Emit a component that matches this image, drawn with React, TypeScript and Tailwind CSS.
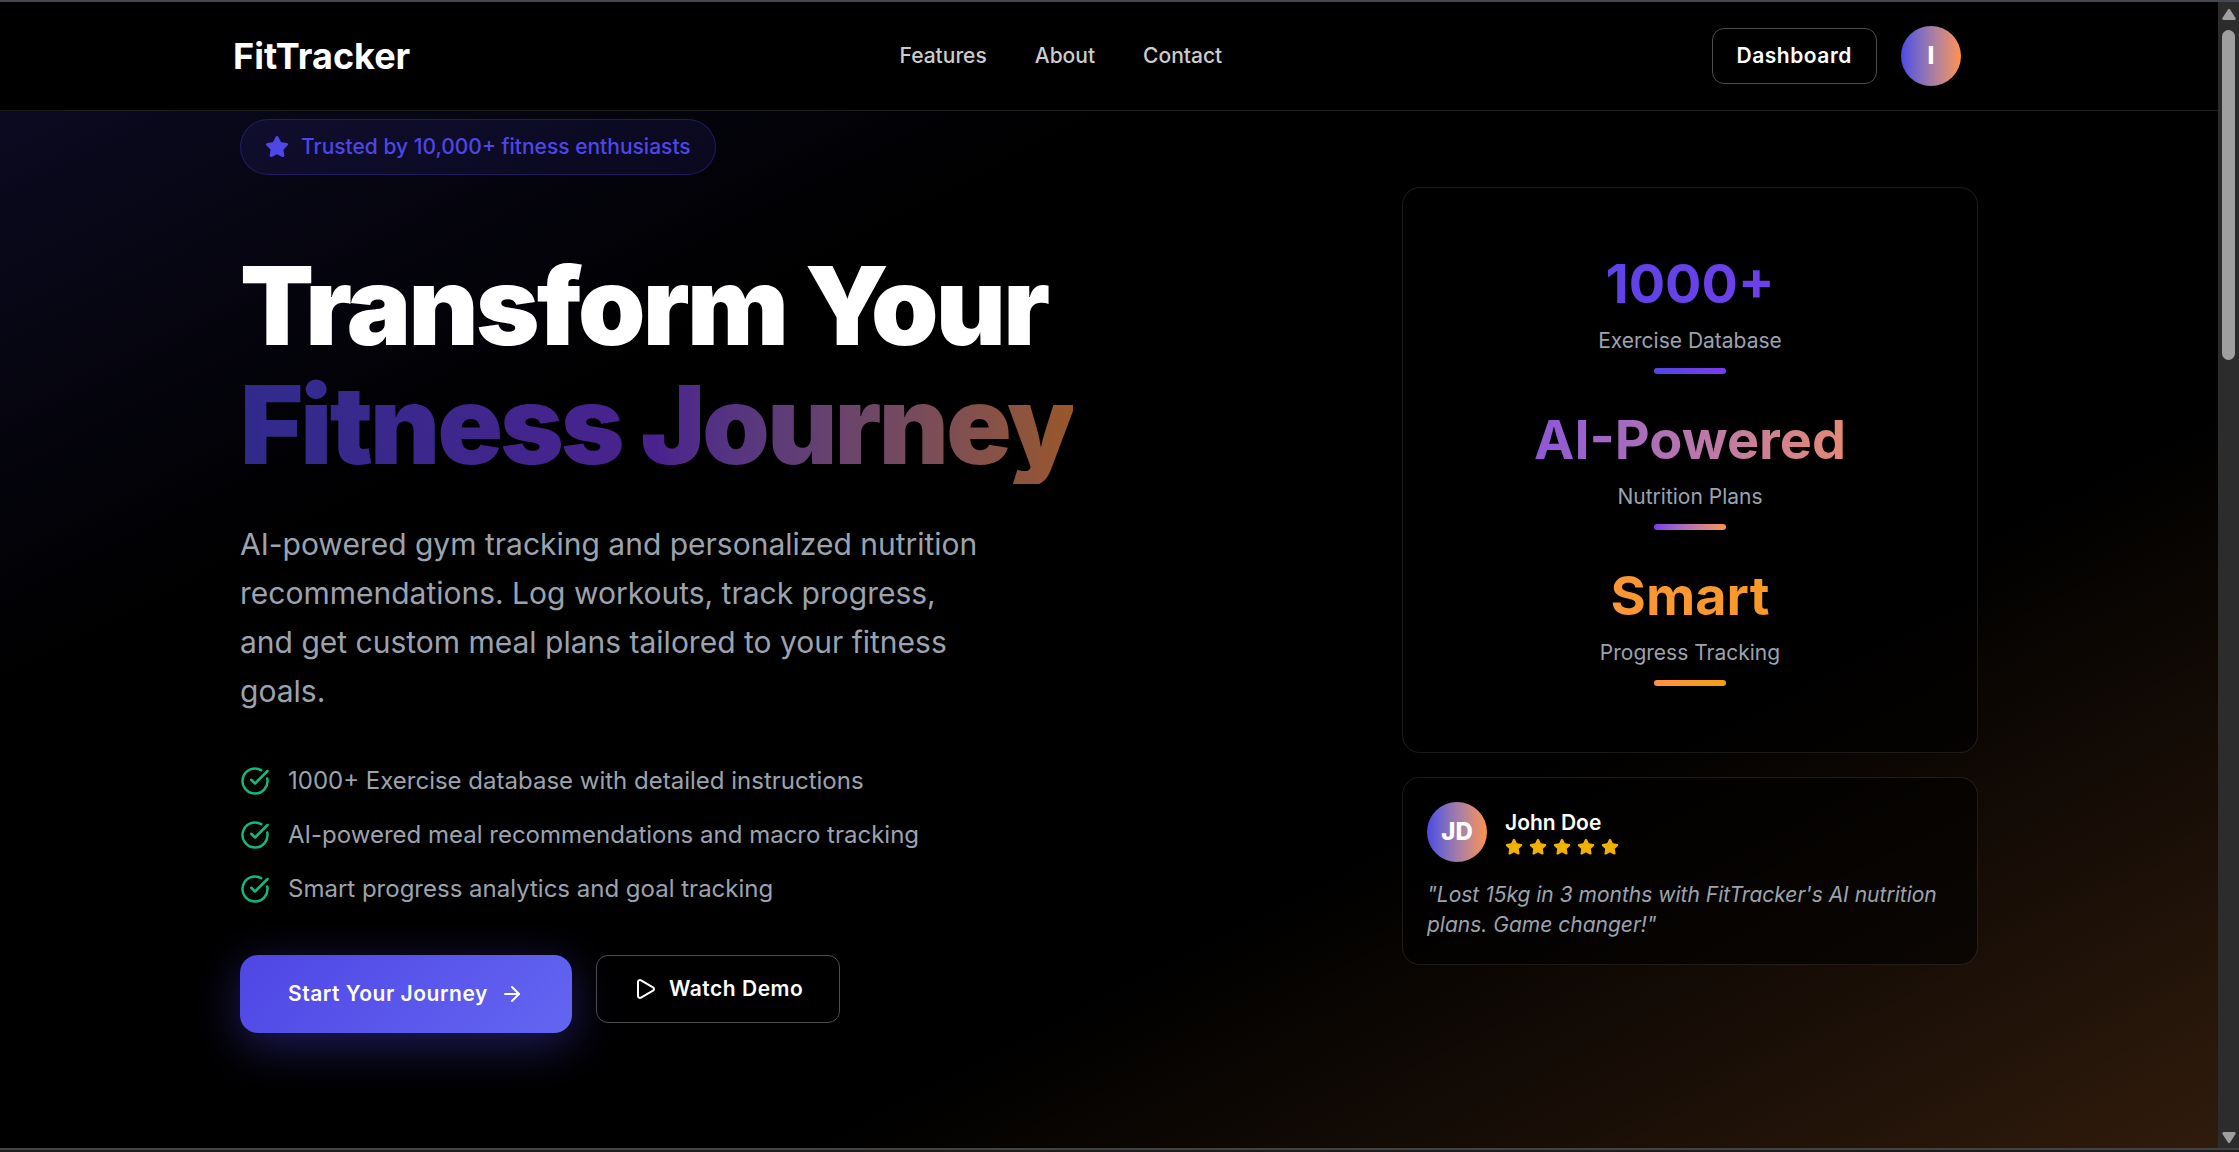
import React from 'react';
import { ArrowRight, CircleCheckBig, Play, Star } from 'lucide-react';

const NAV_LINKS = ['Features', 'About', 'Contact'];

const HIGHLIGHTS = [
  '1000+ Exercise database with detailed instructions',
  'AI-powered meal recommendations and macro tracking',
  'Smart progress analytics and goal tracking',
];

const STATS = [
  {
    value: '1000+',
    label: 'Exercise Database',
    gradient: 'from-[#4f46e5] to-[#7c3aed]',
  },
  {
    value: 'AI-Powered',
    label: 'Nutrition Plans',
    gradient: 'from-[#7c3aed] to-[#ff9142]',
  },
  {
    value: 'Smart',
    label: 'Progress Tracking',
    gradient: 'from-[#ff9142] to-[#f59e0b]',
  },
];

function Avatar({ initials }: { initials: string }) {
  return (
    <span className="flex size-[60px] shrink-0 items-center justify-center rounded-full bg-linear-to-r from-[#4f46e5] to-[#ff9142] text-2xl font-extrabold text-white">
      {initials}
    </span>
  );
}

function Header() {
  return (
    <header className="border-b border-[#1c1c1c] bg-black">
      <div className="mx-auto flex h-[108px] max-w-[1752px] items-center justify-between pr-6">
        <a href="#" className="text-4xl font-bold text-white">
          FitTracker
        </a>
        <nav className="flex gap-12">
          {NAV_LINKS.map(link => (
            <a
              key={link}
              href={`#${link.toLowerCase()}`}
              className="text-[21px] leading-8 font-medium text-[#cccccc]"
            >
              {link}
            </a>
          ))}
        </nav>
        <div className="flex items-center gap-6">
          <button
            type="button"
            className="h-14 rounded-xl border border-[#4d4d4d] px-6 text-[21px] font-semibold tracking-wide text-white"
          >
            Dashboard
          </button>
          <button type="button" aria-label="Account">
            <Avatar initials="I" />
          </button>
        </div>
      </div>
    </header>
  );
}

function HeroCopy() {
  return (
    <div>
      <div className="inline-flex h-14 items-center gap-3 rounded-full border border-[#4f46e5]/30 bg-[#4f46e5]/10 px-6 text-[21px] font-medium text-[#4f46e5]">
        <Star className="size-6 fill-current" />
        Trusted by 10,000+ fitness enthusiasts
      </div>

      <h1 className="mt-[71px] text-[108px] leading-[119px] font-black tracking-tight text-white">
        Transform Your
        <br />
        <span className="inline-block bg-linear-to-r from-[#4f46e5] via-[#7c3aed] to-[#ff9142] bg-clip-text text-transparent opacity-60">
          Fitness Journey
        </span>
      </h1>

      <p className="mt-9 max-w-[750px] text-3xl leading-[49px] text-[#9ca3af]">
        AI-powered gym tracking and personalized nutrition recommendations. Log
        workouts, track progress, and get custom meal plans tailored to your
        fitness goals.
      </p>

      <ul className="mt-[47px] space-y-[18px]">
        {HIGHLIGHTS.map(item => (
          <li
            key={item}
            className="flex items-center gap-[18px] text-2xl leading-9 text-[#9ca3af]"
          >
            <CircleCheckBig className="size-[30px] text-[#10b981]" />
            {item}
          </li>
        ))}
      </ul>

      <div className="mt-12 flex items-start gap-6 text-[21px] font-semibold tracking-wide text-white">
        <button
          type="button"
          className="flex h-[78px] items-center gap-3 rounded-[18px] bg-linear-135/srgb from-[#4f46e5] to-[#6366f1] px-12 shadow-[0_12px_48px_rgba(79,70,229,0.4)]"
        >
          Start Your Journey
          <ArrowRight className="size-6" />
        </button>
        <button
          type="button"
          className="flex h-[68px] items-center gap-3 rounded-xl border border-[#4d4d4d] px-9"
        >
          <Play className="size-6" />
          Watch Demo
        </button>
      </div>
    </div>
  );
}

function StatsCard() {
  return (
    <div className="space-y-[34px] rounded-[18px] border border-white/10 bg-black/60 px-12 pt-16 pb-[66px] text-center">
      {STATS.map(stat => (
        <div key={stat.label}>
          <div
            className={`bg-linear-to-r bg-clip-text text-[54px] leading-[63px] font-bold text-transparent ${stat.gradient}`}
          >
            {stat.value}
          </div>
          <div className="mt-2.5 text-[21px] leading-8 text-[#9ca3af]">
            {stat.label}
          </div>
          <div
            className={`mx-auto mt-[11px] h-1.5 w-18 rounded-full bg-linear-to-r ${stat.gradient}`}
          />
        </div>
      ))}
    </div>
  );
}

function Testimonial() {
  return (
    <figure className="rounded-[18px] border border-white/10 bg-black/60 p-6">
      <figcaption className="flex items-center gap-[18px]">
        <Avatar initials="JD" />
        <div className="pb-0.5">
          <div className="text-[21px] leading-[31px] font-semibold text-white">
            John Doe
          </div>
          <div className="flex gap-1.5 text-[#f0b100]">
            {[1, 2, 3, 4, 5].map(n => (
              <Star key={n} className="size-[18px] fill-current" />
            ))}
          </div>
        </div>
      </figcaption>
      <blockquote className="mt-[18px] text-[21px] leading-[30px] text-[#9ca3af] italic">
        "Lost 15kg in 3 months with FitTracker's AI nutrition plans. Game
        changer!"
      </blockquote>
    </figure>
  );
}

function ScrollRail() {
  return (
    <div
      aria-hidden="true"
      className="flex w-[21px] shrink-0 flex-col items-center bg-[#2c2c2c] pt-1.5 pb-1"
    >
      <svg viewBox="0 0 14 12" className="h-3 w-3.5 fill-[#9f9f9f]">
        <path d="M6 1.5Q7 0 8 1.5L13.6 10Q14 12 12.5 12H1.5Q0 12 .4 10Z" />
      </svg>
      <div className="mt-2.5 h-[330px] w-[13px] rounded-full bg-[#9f9f9f]" />
      <svg viewBox="0 0 14 12" className="mt-auto h-3 w-3.5 fill-[#9f9f9f]">
        <path d="M6 10.5Q7 12 8 10.5L13.6 2Q14 0 12.5 0H1.5Q0 0 .4 2Z" />
      </svg>
    </div>
  );
}

export default function App() {
  return (
    <div className="flex min-h-screen flex-col border-t-2 border-[#434851] bg-black font-['Inter',sans-serif]">
      <div className="flex grow">
        <div className="flex min-w-0 grow flex-col bg-[linear-gradient(to_bottom_right,rgba(79,70,229,0.17)_0%,transparent_30%,transparent_68%,rgba(255,145,66,0.19)_100%)]">
          <Header />
          <main className="mx-auto flex w-full max-w-[1738px] items-start justify-between gap-12 pt-2">
            <HeroCopy />
            <aside className="mt-[68px] w-[576px] shrink-0 space-y-6">
              <StatsCard />
              <Testimonial />
            </aside>
          </main>
        </div>
        <ScrollRail />
      </div>
      <div className="h-1 border-t-2 border-[#434343] bg-[#1e1e1e]" />
    </div>
  );
}
